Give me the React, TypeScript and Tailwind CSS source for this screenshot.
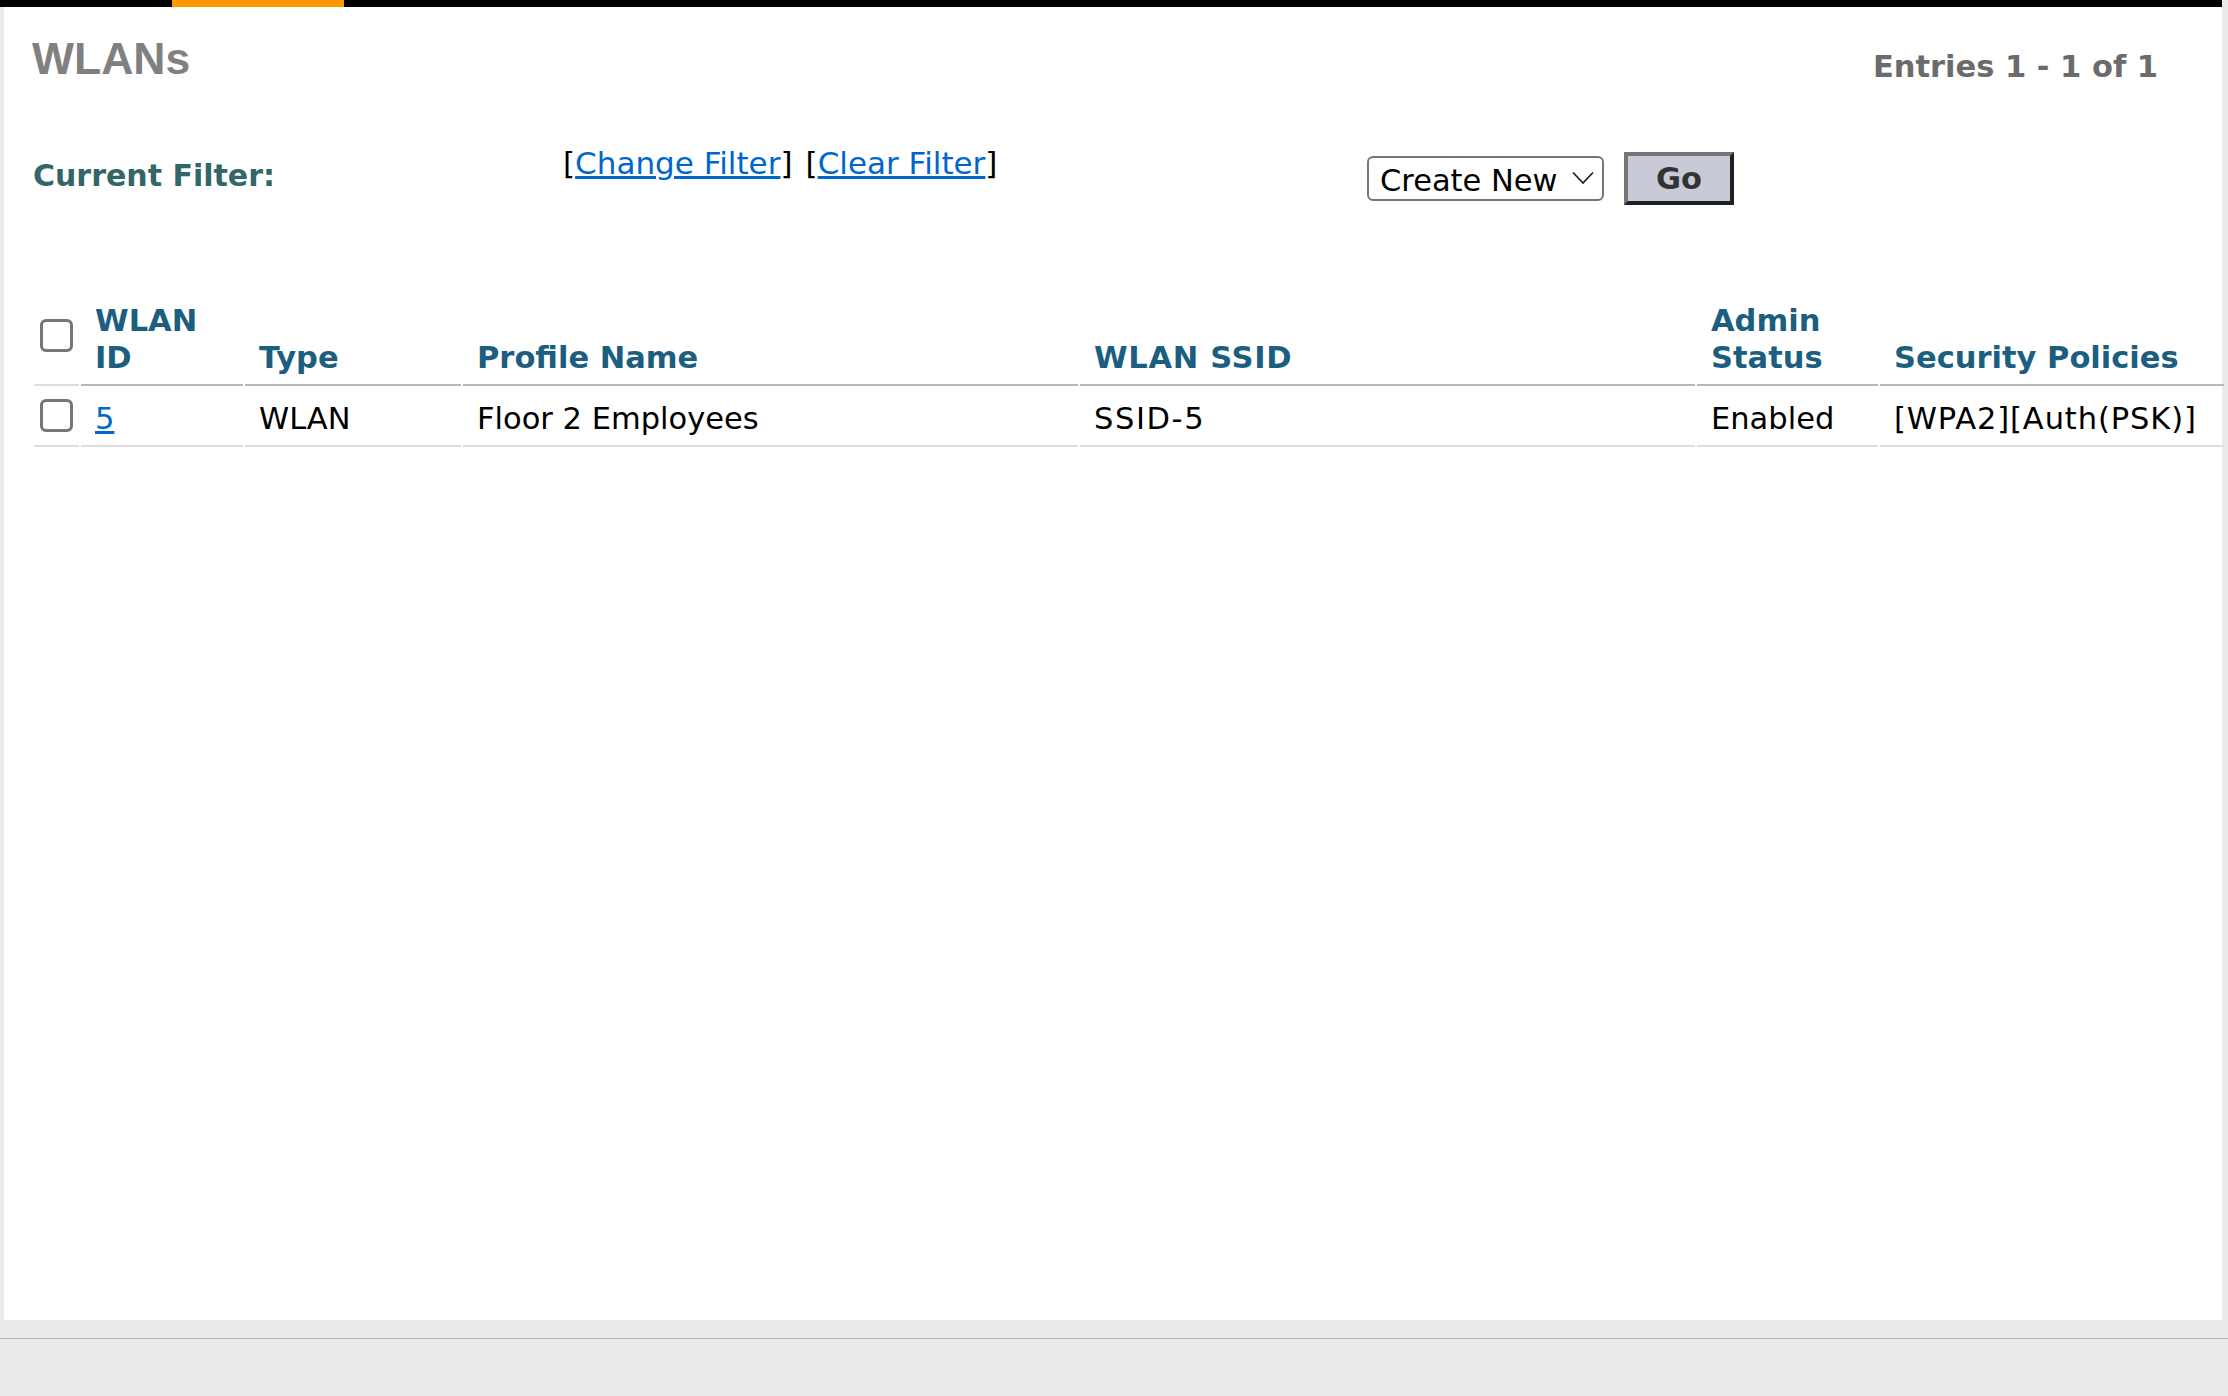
const columns = ["w-[45px]", "w-[162px]", "w-[216px]", "w-[615px]", "w-[615px]", "w-[181px]", "w-[344px]"];

const headCell = "border-b-2 border-[#b8b8b8] pl-[14px] pb-[8px] pt-0 align-bottom text-left font-bold text-[#1b5e80] leading-[37px]";
const bodyCell = "border-b-2 border-[#dddddd] pl-[14px] pt-[7px] h-[61px] align-middle font-normal text-black";

function Checkbox() {
    return <input type="checkbox" className="block appearance-none w-[33px] h-[33px] ml-[6px] rounded-[6px] border-[3px] border-[#767676] bg-white" />
}

export default function App() {
    return <div className="w-[2228px] h-[1396px] bg-[#ebebeb] flex flex-col font-['DejaVu_Sans',sans-serif] text-[30.5px] overflow-hidden">
        <div className="h-[7px] mr-[6px] bg-black flex">
            <div className="ml-[172px] w-[172px] bg-[#ff9900]"></div>
        </div>
        <div className="ml-[4px] mr-[6px] h-[1313px] bg-white">
            <div className="flex justify-between pl-[28px] pr-[64px]">
                <h1 className="mt-[22px] font-['Liberation_Sans',sans-serif] text-[44.5px] leading-[60px] font-bold text-[#808080]">WLANs</h1>
                <div className="mt-[35px] leading-[50px] font-bold text-[#6b6b6b]">Entries 1 - 1 of 1</div>
            </div>
            <div className="flex mt-[46px] pl-[29px]">
                <div className="w-[530px] pt-[18px] text-[30px] text-[#336666] font-bold leading-[40px]">Current Filter:</div>
                <div className="w-[804px] pt-[5px] text-[31px] leading-[40px] text-black">
                    [<a href="#" className="text-[#0066cc] underline">Change Filter</a>]<span className="ml-[13px]">[</span><a href="#" className="text-[#0066cc] underline">Clear Filter</a>]
                </div>
                <div className="relative mt-[18px] w-[237px] h-[45px]">
                    <select className="appearance-none w-full h-full pl-[11px] rounded-[6px] border-2 border-[#767676] bg-white text-black">
                        <option>Create New</option>
                    </select>
                    <svg className="absolute right-[10px] top-[15px] pointer-events-none" width="22" height="14" viewBox="0 0 22 14" fill="none">
                        <path d="M1 1.5L11 12L21 1.5" stroke="#222222" strokeWidth="1.8" />
                    </svg>
                </div>
                <button className="ml-[20px] mt-[14px] w-[110px] h-[53px] border-4 border-t-[#767676] border-l-[#767676] border-r-[#212121] border-b-[#212121] bg-[#c8cad7] font-bold text-[#333333]">Go</button>
            </div>
            <table className="mt-[97px] ml-[28px] table-fixed border-separate border-spacing-x-[2px] border-spacing-y-0 w-[2192px]">
                <colgroup>
                    {columns.map((c, i) => <col key={i} className={c} />)}
                </colgroup>
                <thead>
                    <tr>
                        <th className="border-b-2 border-[#dddddd] pb-[32px] align-bottom"><Checkbox /></th>
                        <th className={headCell}>WLAN<br />ID</th>
                        <th className={headCell}>Type</th>
                        <th className={headCell}>Profile Name</th>
                        <th className={headCell + " tracking-[0.7px]"}>WLAN SSID</th>
                        <th className={headCell}>Admin<br />Status</th>
                        <th className={headCell}>Security Policies</th>
                    </tr>
                </thead>
                <tbody>
                    <tr>
                        <td className="border-b-2 border-[#dddddd] align-middle"><Checkbox /></td>
                        <td className={bodyCell}><a href="#" className="text-[#0066cc] underline">5</a></td>
                        <td className={bodyCell}>WLAN</td>
                        <td className={bodyCell}>Floor 2 Employees</td>
                        <td className={bodyCell + " tracking-[1.6px]"}>SSID-5</td>
                        <td className={bodyCell}>Enabled</td>
                        <td className={bodyCell + " tracking-[0.9px]"}>[WPA2][Auth(PSK)]</td>
                    </tr>
                </tbody>
            </table>
        </div>
        <div className="mt-[18px] border-t border-[#b5b5b5]"></div>
    </div>
}
